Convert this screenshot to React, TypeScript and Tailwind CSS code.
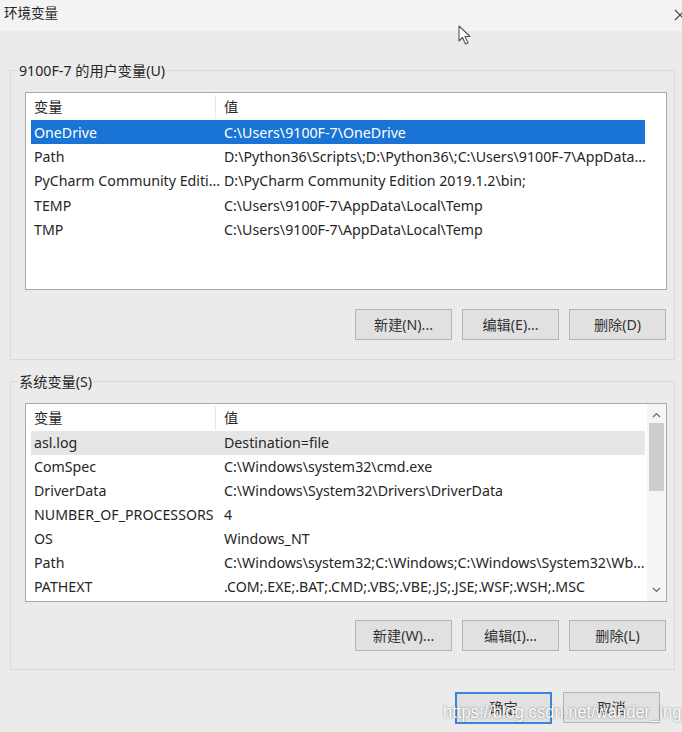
import React from "react";

const userVars: [string, string][] = [
  ["OneDrive", "C:\\Users\\9100F-7\\OneDrive"],
  ["Path", "D:\\Python36\\Scripts\\;D:\\Python36\\;C:\\Users\\9100F-7\\AppData..."],
  ["PyCharm Community Editi...", "D:\\PyCharm Community Edition 2019.1.2\\bin;"],
  ["TEMP", "C:\\Users\\9100F-7\\AppData\\Local\\Temp"],
  ["TMP", "C:\\Users\\9100F-7\\AppData\\Local\\Temp"],
];

const sysVars: [string, string][] = [
  ["asl.log", "Destination=file"],
  ["ComSpec", "C:\\Windows\\system32\\cmd.exe"],
  ["DriverData", "C:\\Windows\\System32\\Drivers\\DriverData"],
  ["NUMBER_OF_PROCESSORS", "4"],
  ["OS", "Windows_NT"],
  ["Path", "C:\\Windows\\system32;C:\\Windows;C:\\Windows\\System32\\Wb..."],
  ["PATHEXT", ".COM;.EXE;.BAT;.CMD;.VBS;.VBE;.JS;.JSE;.WSF;.WSH;.MSC"],
];

function GroupBox({
  label,
  bottom,
  children,
}: {
  label: string;
  bottom: string;
  children: React.ReactNode;
}) {
  return (
    <div className={"relative w-[665px] border border-[#d9d9d9] pl-[14px] pr-[8px] pt-[21px] " + bottom}>
      <span className="absolute left-[7px] -top-[9px] bg-[#ebebeb] px-[1px] leading-[18px]">
        {label}
      </span>
      {children}
    </div>
  );
}

function WinButton({ label, primary = false }: { label: string; primary?: boolean }) {
  return (
    <div
      className={
        primary
          ? "w-[97px] h-[32px] border-2 border-[#3a85da] bg-[#e1e1e1] flex items-center justify-center text-[#333]"
          : "w-[97px] h-[31px] border border-[#b4b4b4] bg-[#e1e1e1] flex items-center justify-center text-[#333]"
      }
    >
      {label}
    </div>
  );
}

function ScrollBar() {
  return (
    <div className="w-[19px] flex flex-col items-center bg-[#f5f5f5]">
      <svg width="9" height="6" viewBox="0 0 9 6" className="mt-[8px]">
        <path d="M1 5 L4.5 1.5 L8 5" fill="none" stroke="#666" strokeWidth="1.2" />
      </svg>
      <div className="mt-[5px] w-[15px] h-[68px] bg-[#cdcdcd]" />
      <div className="flex-1" />
      <svg width="9" height="6" viewBox="0 0 9 6" className="mb-[8px]">
        <path d="M1 1 L4.5 4.5 L8 1" fill="none" stroke="#666" strokeWidth="1.2" />
      </svg>
    </div>
  );
}

function VarList({
  rows,
  selected,
  hovered,
  scroll = false,
  height,
  rowHeight,
}: {
  rows: [string, string][];
  selected?: number;
  hovered?: number;
  scroll?: boolean;
  height: string;
  rowHeight: string;
}) {
  return (
    <div className={"w-[642px] border border-[#a9a9a9] bg-white flex " + height}>
      <div className="flex-1 flex flex-col overflow-hidden">
        <div className="h-[26px] flex items-center shrink-0 pt-[2px]">
          <div className="w-[190px] h-full pl-[8px] flex items-center border-r border-[#e8e8e8]">变量</div>
          <div className="pl-[8px]">值</div>
        </div>
        <div className="mt-[1px] pl-[5px]">
          {rows.map(([name, value], idx) => (
            <div
              key={idx}
              className={
                "w-[614px] grid grid-cols-[190px_1fr] items-center whitespace-nowrap " +
                rowHeight +
                " " +
                (idx === selected ? "bg-[#1a74d6] text-white" : idx === hovered ? "bg-[#e6e6e6]" : "")
              }
            >
              <span className="pl-[3px] overflow-hidden">{name}</span>
              <span className="pl-[3px] overflow-hidden">{value}</span>
            </div>
          ))}
        </div>
      </div>
      {scroll && <ScrollBar />}
    </div>
  );
}

export default function App() {
  return (
    <div className="relative w-[682px] h-[732px] overflow-hidden bg-[#ebebeb] text-[#262626] text-[14.2px] font-['Noto_Sans','Noto_Sans_CJK_SC',sans-serif]">
      <div className="h-[31px] bg-[#f3f3f3] flex items-center justify-between pl-[4px] pb-[4px]">
        <span className="text-[13.5px]">环境变量</span>
        <svg width="12" height="12" viewBox="0 0 12 12" className="-mr-[4px] mt-[2px]">
          <path d="M1 1 L11 11 M11 1 L1 11" stroke="#444" strokeWidth="1.2" />
        </svg>
      </div>

      <div className="px-[10px] pt-[39px]">
        <GroupBox label="9100F-7 的用户变量(U)" bottom="pb-[19px]">
          <VarList rows={userVars} selected={0} height="h-[198px]" rowHeight="h-[24.4px]" />
          <div className="mt-[19px] flex justify-end gap-[10px]">
            <WinButton label="新建(N)..." />
            <WinButton label="编辑(E)..." />
            <WinButton label="删除(D)" />
          </div>
        </GroupBox>

        <div className="mt-[21px]">
          <GroupBox label="系统变量(S)" bottom="pb-[18px]">
            <VarList rows={sysVars} hovered={0} scroll height="h-[199px]" rowHeight="h-[24px]" />
            <div className="mt-[18px] flex justify-end gap-[10px]">
              <WinButton label="新建(W)..." />
              <WinButton label="编辑(I)..." />
              <WinButton label="删除(L)" />
            </div>
          </GroupBox>
        </div>

        <div className="mt-[22px] flex justify-end gap-[11px] pr-[12px]">
          <WinButton label="确定" primary />
          <WinButton label="取消" />
        </div>
      </div>

      {/* mouse pointer */}
      <svg width="16" height="22" viewBox="0 0 16 22" className="absolute left-[458px] top-[25px]">
        <path
          d="M1 1 L1 16 L4.5 12.5 L7.5 19 L10 18 L7 11.5 L12 11.5 Z"
          fill="#fff"
          stroke="#555"
          strokeWidth="1.1"
          strokeLinejoin="round"
        />
      </svg>

      {/* watermark */}
      <div className="absolute left-[443px] top-[699px] text-[18px] text-white font-['Liberation_Sans',sans-serif] scale-x-[0.92] origin-left whitespace-nowrap [text-shadow:0_0_2px_rgba(0,0,0,0.55)]">
        https://blog.csdn.net/wander_ing
      </div>
    </div>
  );
}
